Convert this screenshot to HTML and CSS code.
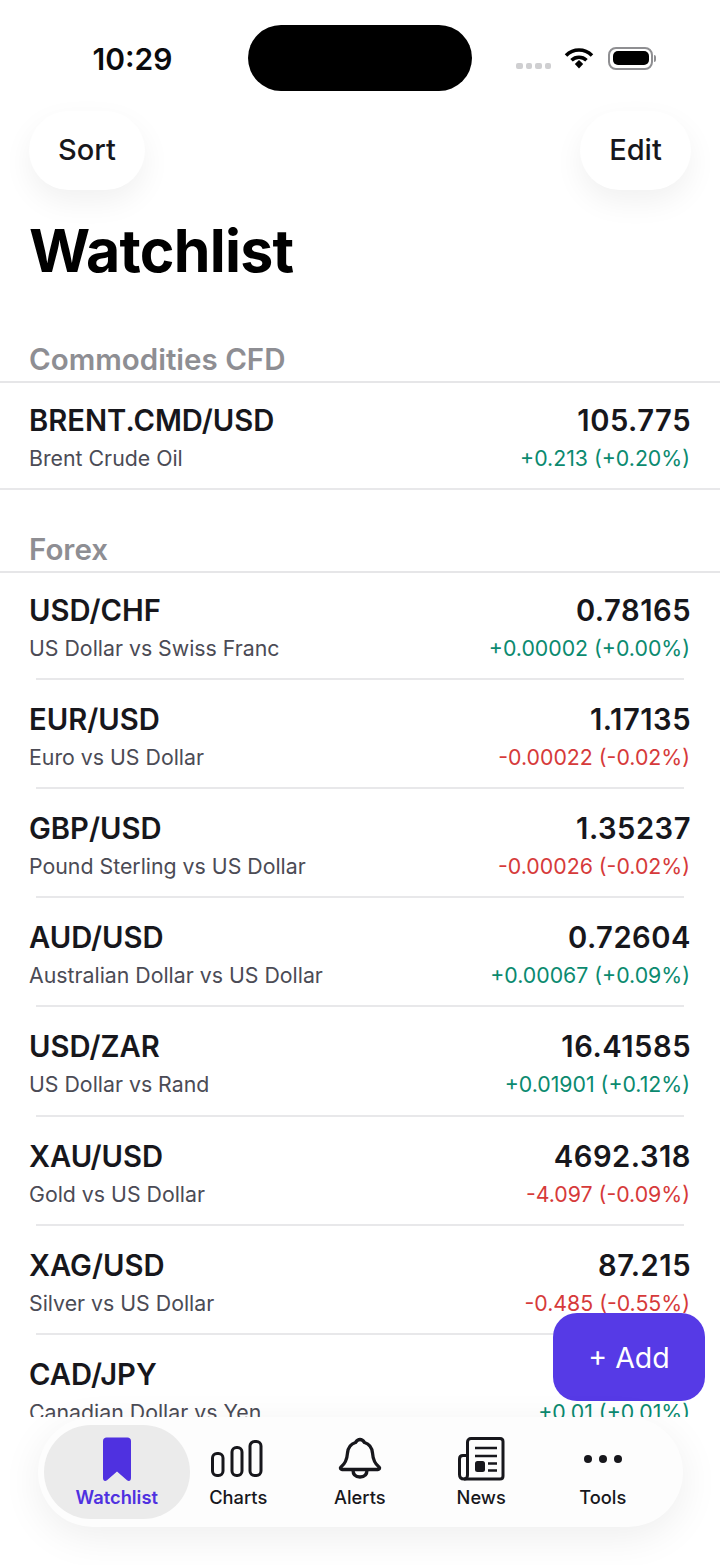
FILE: index.html
```html
<!DOCTYPE html>
<html lang="en">
<head>
    <meta charset="UTF-8">
    <meta name="viewport" content="width=device-width, initial-scale=1.0">
    <title>Watchlist</title>
    <link rel="stylesheet" href="styles.css">
</head>
<body>
    <div class="screen">
        <div class="status-bar">
            <div class="status-time">10:29</div>
            <div class="island"></div>
            <div class="status-icons">
                <div class="signal"><span></span><span></span><span></span><span></span></div>
                <svg class="wifi" width="30" height="22" viewBox="0 0 30 22">
                    <path d="M2 8.5C9.5 1.2 20.500 1.200 28 8.500" fill="none" stroke="#000" stroke-width="3.600"/>
                    <path d="M7.500 13.300C11.800 9.300 18.200 9.300 22.500 13.300" fill="none" stroke="#000" stroke-width="3.600"/>
                    <path d="M10.800 17L15 12.900L19.200 17L15 21.500Z" fill="#000"/>
                </svg>
                <div class="battery"><div class="battery-fill"></div></div>
                <div class="battery-cap"></div>
            </div>
        </div>

        <div class="top-actions">
            <button class="pill-btn sort-btn">Sort</button>
            <button class="pill-btn edit-btn">Edit</button>
        </div>

        <h1 class="page-title">Watchlist</h1>

        <section class="group group-first">
            <h2 class="group-title">Commodities CFD</h2>
            <div class="row row-single">
                <div class="row-line"><span class="symbol">BRENT.CMD/USD</span><span class="price">105.775</span></div>
                <div class="row-line"><span class="name">Brent Crude Oil</span><span class="change up">+0.213 (+0.20%)</span></div>
            </div>
        </section>

        <section class="group">
            <h2 class="group-title">Forex</h2>
            <div class="row">
                <div class="row-line"><span class="symbol">USD/CHF</span><span class="price">0.78165</span></div>
                <div class="row-line"><span class="name">US Dollar vs Swiss Franc</span><span class="change up">+0.00002 (+0.00%)</span></div>
            </div>
            <div class="row">
                <div class="row-line"><span class="symbol">EUR/USD</span><span class="price">1.17135</span></div>
                <div class="row-line"><span class="name">Euro vs US Dollar</span><span class="change down">-0.00022 (-0.02%)</span></div>
            </div>
            <div class="row">
                <div class="row-line"><span class="symbol">GBP/USD</span><span class="price">1.35237</span></div>
                <div class="row-line"><span class="name">Pound Sterling vs US Dollar</span><span class="change down">-0.00026 (-0.02%)</span></div>
            </div>
            <div class="row">
                <div class="row-line"><span class="symbol">AUD/USD</span><span class="price">0.72604</span></div>
                <div class="row-line"><span class="name">Australian Dollar vs US Dollar</span><span class="change up">+0.00067 (+0.09%)</span></div>
            </div>
            <div class="row">
                <div class="row-line"><span class="symbol">USD/ZAR</span><span class="price">16.41585</span></div>
                <div class="row-line"><span class="name">US Dollar vs Rand</span><span class="change up">+0.01901 (+0.12%)</span></div>
            </div>
            <div class="row">
                <div class="row-line"><span class="symbol">XAU/USD</span><span class="price">4692.318</span></div>
                <div class="row-line"><span class="name">Gold vs US Dollar</span><span class="change down">-4.097 (-0.09%)</span></div>
            </div>
            <div class="row">
                <div class="row-line"><span class="symbol">XAG/USD</span><span class="price">87.215</span></div>
                <div class="row-line"><span class="name">Silver vs US Dollar</span><span class="change down">-0.485 (-0.55%)</span></div>
            </div>
            <div class="row">
                <div class="row-line"><span class="symbol">CAD/JPY</span></div>
                <div class="row-line"><span class="name">Canadian Dollar vs Yen</span><span class="change up">+0.01 (+0.01%)</span></div>
            </div>
        </section>

        <button class="add-btn">+ Add</button>

        <div class="bottom-area">
            <nav class="tab-bar">
                <a class="tab tab-active" href="#">
                    <svg width="48" height="46" viewBox="0 0 48 46">
                        <path d="M10 4C10 1.800 11.500 0.500 13.500 0.500H34.500C36.500 0.500 38 1.800 38 4V41C38 43.800 36 44.800 34 43.300L24 34.500L14 43.300C12 44.800 10 43.800 10 41Z" fill="#4f31e0"/>
                    </svg>
                    <span>Watchlist</span>
                </a>
                <a class="tab" href="#">
                    <svg width="56" height="46" viewBox="0 0 56 46">
                        <rect x="2.500" y="16.500" width="10.500" height="22" rx="4.500" fill="none" stroke="#17171c" stroke-width="3"/>
                        <rect x="22" y="10.500" width="10" height="28" rx="4.500" fill="none" stroke="#17171c" stroke-width="3"/>
                        <rect x="40" y="4.500" width="11" height="34" rx="4.500" fill="none" stroke="#17171c" stroke-width="3"/>
                    </svg>
                    <span>Charts</span>
                </a>
                <a class="tab" href="#">
                    <svg width="48" height="46" viewBox="0 0 48 46">
                        <path d="M24 2.500C26.500 2.500 27.500 4 28.500 5.500C33.500 7 36 11 36.500 16C37 23 38.500 26.500 43 30C44.200 31.200 43.500 32.500 42 32.500H6C4.500 32.500 3.800 31.200 5 30C9.500 26.500 11 23 11.500 16C12 11 14.500 7 19.500 5.500C20.500 4 21.500 2.500 24 2.500Z" fill="none" stroke="#17171c" stroke-width="3.300" stroke-linejoin="round"/>
                        <path d="M17 33C17 38 20 40 24 40C28 40 31 38 31 33" fill="none" stroke="#17171c" stroke-width="3.300"/>
                    </svg>
                    <span>Alerts</span>
                </a>
                <a class="tab" href="#">
                    <svg width="48" height="46" viewBox="0 0 48 46">
                        <path d="M10.500 38V5C10.500 3 12 1.500 14 1.500H43C44.800 1.500 46 2.800 46 4.500V39C46 40.800 44.800 42 43 42H7" fill="none" stroke="#17171c" stroke-width="3"/>
                        <path d="M10.500 18.500H6C3.800 18.500 2.500 20 2.500 22V37.500C2.500 40.500 4.500 42 7 42C9 42 10.500 40.500 10.500 38" fill="none" stroke="#17171c" stroke-width="3"/>
                        <path d="M18 11H40M18 19H40M31 26.500H40M31 33.500H40" fill="none" stroke="#17171c" stroke-width="2.600"/>
                        <rect x="18" y="24" width="10" height="11" rx="2.500" fill="#17171c"/>
                    </svg>
                    <span>News</span>
                </a>
                <a class="tab" href="#">
                    <svg width="48" height="46" viewBox="0 0 48 46">
                        <circle cx="9" cy="22" r="4" fill="#17171c"/>
                        <circle cx="24" cy="22" r="4" fill="#17171c"/>
                        <circle cx="39" cy="22" r="4" fill="#17171c"/>
                    </svg>
                    <span>Tools</span>
                </a>
            </nav>
        </div>
    </div>
</body>
</html>
```

FILE: styles.css
```css
body {
    margin: 0;
    background-color: #fff;
    font-family: 'Inter', 'Liberation Sans', sans-serif;
}
.screen {
    position: relative;
    width: 720px;
    height: 1565px;
    overflow: hidden;
    background-color: #fff;
}
.status-bar {
    display: grid;
    grid-template-columns: 248px 224px 248px;
    grid-template-rows: 66px;
    padding-top: 25px;
}
.status-time {
    padding-left: 17px;
    font-size: 30px;
    font-weight: 600;
    line-height: 68px;
    text-align: center;
    color: #0b0b0d;
}
.island {
    background-color: #000;
    border-radius: 33px;
}
.status-icons {
    display: flex;
    align-items: center;
    padding-left: 44px;
}
.signal {
    display: flex;
    gap: 3px;
    margin-top: 16px;
    margin-right: 13px;
}
.signal span {
    width: 6.500px;
    height: 6.500px;
    border-radius: 2px;
    background-color: #cfcfd1;
}
.wifi {
    margin-right: 14px;
}
.battery {
    box-sizing: border-box;
    width: 45px;
    height: 23px;
    padding: 2.500px;
    border: 2px solid #8f8f92;
    border-radius: 8px;
}
.battery-fill {
    height: 100%;
    border-radius: 5px;
    background-color: #000;
}
.battery-cap {
    width: 2px;
    height: 7px;
    margin-left: 1px;
    border-radius: 0 2px 2px 0;
    background-color: #8f8f92;
}
.top-actions {
    display: flex;
    justify-content: space-between;
    margin-top: 20px;
    padding: 0 29px;
}
.pill-btn {
    height: 79px;
    padding: 0 0 2px;
    border: none;
    border-radius: 40px;
    background-color: #fff;
    box-shadow: 0 12px 30px rgba(0, 0, 0, 0.06);
    font-family: inherit;
    font-size: 29px;
    font-weight: 500;
    color: #17171c;
}
.sort-btn {
    width: 116px;
}
.edit-btn {
    width: 111px;
}
.page-title {
    margin: 23px 0 0 29px;
    font-size: 59px;
    line-height: 76px;
    font-weight: 700;
    letter-spacing: -0.750px;
    color: #000;
}
.group {
    margin-top: 40px;
}
.group-first {
    margin-top: 51px;
}
.group-title {
    margin: 0;
    padding: 0 29px 2px;
    font-size: 29.500px;
    line-height: 39px;
    font-weight: 600;
    color: #8e8e93;
    border-bottom: 2px solid #e6e6e8;
}
.row {
    height: 107.150px;
    margin: 0 36px;
    border-bottom: 2px solid #e8e8ea;
}
.group-title + .row {
    height: 105px;
}
.row-single {
    margin: 0;
    padding: 0 36px;
}
.row-line {
    display: flex;
    justify-content: space-between;
    align-items: baseline;
    margin: 0 -7px;
}
.row-line:first-child {
    padding-top: 22px;
}
.group-title + .row .row-line:first-child {
    padding-top: 20px;
}
.row-line + .row-line {
    margin-top: 4px;
}
.symbol,
.price {
    font-size: 29.200px;
    line-height: 36px;
    font-weight: 600;
    color: #17171c;
}
.price {
    letter-spacing: 0.500px;
}
.name,
.change {
    font-size: 21.300px;
    line-height: 30px;
}
.name {
    color: #4b4b55;
}
.change {
    margin-right: 1px;
}
.up {
    color: #0b8a6f;
}
.down {
    color: #d63a3a;
}
.add-btn {
    position: absolute;
    left: 553px;
    top: 1313px;
    width: 152px;
    height: 88px;
    border: none;
    border-radius: 24px;
    background-color: #563ae6;
    font-family: inherit;
    font-size: 28.500px;
    color: #fff;
}
.bottom-area {
    position: absolute;
    left: 0;
    right: 0;
    top: 1417px;
    bottom: 0;
    background-color: #fff;
}
.tab-bar {
    display: flex;
    width: 627px;
    height: 110px;
    margin-left: 38px;
    padding-left: 18px;
    border-radius: 55px;
    background-color: #fdfdfd;
    box-shadow: 0 10px 40px rgba(0, 0, 0, 0.07);
}
.tab {
    position: relative;
    display: flex;
    flex: none;
    flex-direction: column;
    align-items: center;
    width: 121.500px;
    padding-top: 20px;
    box-sizing: border-box;
    text-decoration: none;
    font-size: 18.300px;
    font-weight: 500;
    line-height: 22px;
    color: #17171c;
}
.tab svg {
    position: relative;
    margin-bottom: 3px;
}
.tab span {
    position: relative;
}
.tab-active {
    font-weight: 600;
    color: #4f31e0;
}
.tab-active::before {
    content: "";
    position: absolute;
    top: 8px;
    bottom: 8px;
    left: -12px;
    right: -12px;
    border-radius: 47px;
    background-color: #ebebeb;
}
```
